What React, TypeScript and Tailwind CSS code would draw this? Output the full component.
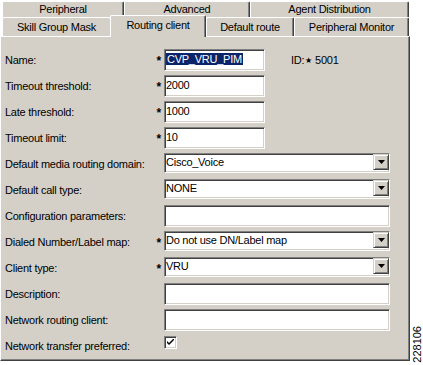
import React from "react";

const sunken =
  "border border-t-[#808080] border-l-[#808080] border-r-white border-b-white shadow-[inset_1px_1px_0_#404040,inset_-1px_-1px_0_#d4d0c8]";
const raised =
  "border border-t-[#d4d0c8] border-l-[#d4d0c8] border-r-[#404040] border-b-[#404040] shadow-[inset_1px_1px_0_#ffffff,inset_-1px_-1px_0_#808080]";

function Tab({
  label,
  w,
  selected = false,
  noRight = false,
  h = 16,
}: {
  label: string;
  w: number;
  selected?: boolean;
  noRight?: boolean;
  h?: number;
}) {
  if (selected) {
    return (
      <div
        style={{ width: w }}
        className="relative -mt-[2px] h-[22px] bg-[#d4d0c8] border-l border-t border-l-white border-t-white border-r border-r-[#404040] shadow-[inset_-1px_0_0_#808080] rounded-tl-[2px] rounded-tr-[2px] flex items-center justify-center pb-[2px]"
      >
        {label}
      </div>
    );
  }
  return (
    <div
      style={{ width: w, height: h }}
      className={
        "bg-[#d4d0c8] border-l border-t border-l-white border-t-white rounded-tl-[2px] rounded-tr-[2px] flex items-center justify-center " +
        (noRight ? "" : "border-r border-r-[#404040] shadow-[inset_-1px_0_0_#808080]")
      }
    >
      {label}
    </div>
  );
}

function Star() {
  return <span className="font-bold text-[12px] leading-none pr-[3px] pt-[1px]">*</span>;
}

function Edit({ w, value }: { w: number; value?: React.ReactNode }) {
  return (
    <div
      style={{ width: w }}
      className={"mt-[1px] h-[22px] bg-white flex items-center pl-[1px] pb-[2px] " + sunken}
    >
      {value}
    </div>
  );
}

function Select({ value }: { value: string }) {
  return (
    <div className={"mt-[1px] h-[20px] w-[226px] bg-white flex items-stretch pl-[1px] " + sunken}>
      <div className="flex-1 flex items-center pb-[1px]">{value}</div>
      <div className={"w-[16px] h-[16px] bg-[#d4d0c8] flex items-center justify-center " + raised}>
        <svg width="7" height="4" viewBox="0 0 7 4">
          <path d="M0 0H7L3.5 4Z" fill="#000" />
        </svg>
      </div>
    </div>
  );
}

function Row({
  label,
  star = false,
  children,
}: {
  label: string;
  star?: boolean;
  children: React.ReactNode;
}) {
  return (
    <div className="flex h-[26px] items-start">
      <div className="w-[150px] h-[24px] flex items-center pl-[4px]">{label}</div>
      <div className="w-[13px] h-[24px] flex items-center justify-end">{star ? <Star /> : null}</div>
      {children}
    </div>
  );
}

export default function App() {
  return (
    <div className="w-[423px] h-[365px] bg-white flex text-black font-['Liberation_Sans',Arial,sans-serif] text-[11px] tracking-[-0.25px] overflow-hidden">
      <div className="w-[410px] flex flex-col">
        <div className="flex pl-[2px] pt-[1px] h-[17px]">
          <Tab label="Peripheral" w={122} />
          <Tab label="Advanced" w={126} />
          <Tab label="Agent Distribution" w={159} />
        </div>
        <div className="flex pl-[2px] h-[19px]">
          <Tab label="Skill Group Mask" w={108} h={19} noRight />
          <Tab label="Routing client" w={96} selected />
          <Tab label="Default route" w={88} h={19} />
          <Tab label="Peripheral Monitor" w={115} h={19} />
        </div>
        <div className="h-[325px] bg-[#d4d0c8] border-l border-t border-l-white border-t-white border-r border-b border-r-[#404040] border-b-[#404040] shadow-[inset_-1px_-1px_0_#808080] pt-[11px]">
          <Row label="Name:" star>
            <Edit
              w={101}
              value={
                <span className="bg-[#0a246a] text-white leading-[12px] px-[1px]">CVP_VRU_PIM</span>
              }
            />
            <div className="ml-[26px] h-[24px] flex items-center">
              <span>ID:</span>
              <span className="text-[8px] ml-[1px] mr-[3px] pt-[2px]">★</span>
              <span>5001</span>
            </div>
          </Row>
          <Row label="Timeout threshold:" star>
            <Edit w={101} value="2000" />
          </Row>
          <Row label="Late threshold:" star>
            <Edit w={101} value="1000" />
          </Row>
          <Row label="Timeout limit:" star>
            <Edit w={101} value="10" />
          </Row>
          <Row label="Default media routing domain:">
            <Select value="Cisco_Voice" />
          </Row>
          <Row label="Default call type:">
            <Select value="NONE" />
          </Row>
          <Row label="Configuration parameters:">
            <Edit w={226} />
          </Row>
          <Row label="Dialed Number/Label map:" star>
            <Select value="Do not use DN/Label map" />
          </Row>
          <Row label="Client type:" star>
            <Select value="VRU" />
          </Row>
          <Row label="Description:">
            <Edit w={226} />
          </Row>
          <Row label="Network routing client:">
            <Edit w={226} />
          </Row>
          <Row label="Network transfer preferred:">
            <div className={"mt-[2px] w-[13px] h-[13px] bg-white flex items-center justify-center " + sunken}>
              <svg width="7" height="7" viewBox="0 0 7 7">
                <path d="M0 2L0 4L2 6L7 1L7 -1L2 4Z" fill="#000" />
              </svg>
            </div>
          </Row>
        </div>
      </div>
      <div className="flex-1 flex items-end pl-[2px] pb-[2px]">
        <span className="[writing-mode:vertical-rl] rotate-180 text-[11px] leading-[11px] tracking-normal">
          228106
        </span>
      </div>
    </div>
  );
}
